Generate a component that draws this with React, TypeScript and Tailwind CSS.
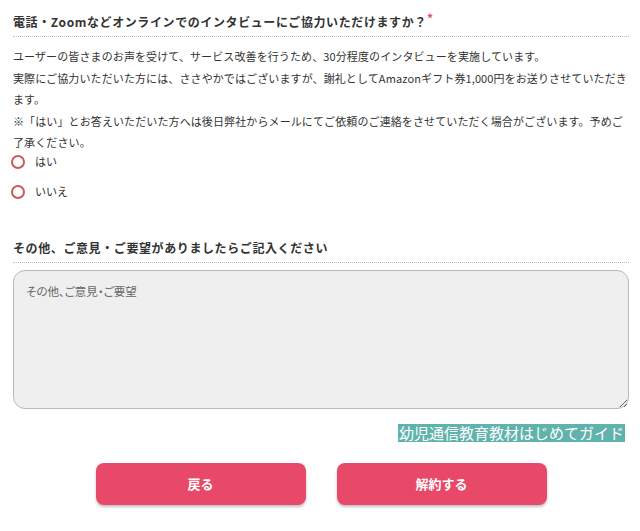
import { useState } from "react";

export default function App() {
  const [answer, setAnswer] = useState("");
  const [note, setNote] = useState("");

  return (
    <div className="min-h-screen bg-white pl-[13px] pr-[11px] pt-[13px] text-[#333] font-['Noto_Sans_CJK_JP','Noto_Sans',sans-serif]">
      <h2 className="border-b border-dotted border-[#bdbdbd] pb-[5px] text-[12px] font-bold leading-[18px] tracking-[0.05em]">
        電話・Zoomなどオンラインでのインタビューにご協力いただけますか？
        <span className="relative -top-[4px] text-[#e8475f]">*</span>
      </h2>

      <p className="mt-[9px] text-[11px] leading-[21.5px] tracking-[0.01em]">
        ユーザーの皆さまのお声を受けて、サービス改善を行うため、30分程度のインタビューを実施しています。
        <br />
        実際にご協力いただいた方には、ささやかではございますが、謝礼としてAmazonギフト券1,000円をお送りさせていただきます。
        <br />
        ※「はい」とお答えいただいた方へは後日弊社からメールにてご依頼のご連絡をさせていただく場合がございます。予めご了承ください。
      </p>

      <div className="mt-[1px] flex flex-col gap-[16px]">
        {["はい", "いいえ"].map((label) => (
          <label
            key={label}
            className="-ml-[2px] flex h-[14px] cursor-pointer items-center gap-[10px] text-[11px]"
            onClick={() => setAnswer(label)}
          >
            <span className="flex h-[14px] w-[14px] items-center justify-center rounded-full border-2 border-[#c95a5e]">
              {answer === label && (
                <span className="h-[6px] w-[6px] rounded-full bg-[#c95a5e]" />
              )}
            </span>
            {label}
          </label>
        ))}
      </div>

      <h2 className="mt-[40px] border-b border-dotted border-[#bdbdbd] pb-[5px] text-[12px] font-bold leading-[18px] tracking-[0.05em]">
        その他、ご意見・ご要望がありましたらご記入ください
      </h2>

      <textarea
        value={note}
        onChange={(e) => setNote(e.target.value)}
        placeholder="その他、ご意見・ご要望"
        className="mt-[7px] block h-[139px] w-full rounded-[12px] border border-[#b8b8b8] bg-[#efefef] px-[12px] py-[12px] text-[11.5px] leading-[16px] outline-none placeholder:text-[#666] [font-feature-settings:'palt']"
      />

      <div className="mt-[15px] flex justify-end pr-[4px]">
        <span className="bg-[#5fb3ac] px-[1px] text-[15px] leading-[18px] text-white">
          幼児通信教育教材はじめてガイド
        </span>
      </div>

      <div className="mt-[21px] flex justify-center gap-[31px]">
        <button className="h-[42px] w-[210px] rounded-[8px] bg-[#e94968] text-[13px] font-bold text-white shadow-[0_2px_3px_rgba(0,0,0,0.25)]">
          戻る
        </button>
        <button className="h-[42px] w-[210px] rounded-[8px] bg-[#e94968] text-[13px] font-bold text-white shadow-[0_2px_3px_rgba(0,0,0,0.25)]">
          解約する
        </button>
      </div>
    </div>
  );
}
